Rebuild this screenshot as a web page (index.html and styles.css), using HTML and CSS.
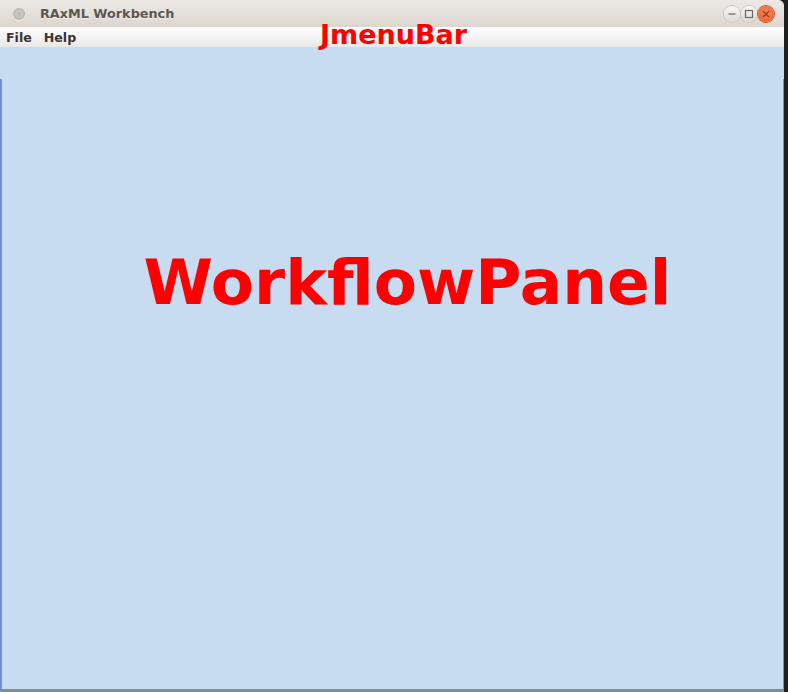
FILE: index.html
```html
<!DOCTYPE html>
<html>
<head>
<meta charset="utf-8">
<link rel="stylesheet" href="styles.css">
</head>
<body>
<div class="window">
  <div class="titlebar">
    <span class="dot"></span>
    <span class="title">RAxML Workbench</span>
    <div class="controls">
      <span class="btn"><svg width="16" height="16" viewBox="0 0 16 16"><line x1="4.5" y1="8" x2="11.5" y2="8" stroke="#6a6660" stroke-width="1.2"/></svg></span>
      <span class="btn"><svg width="16" height="16" viewBox="0 0 16 16"><rect x="4.5" y="4.5" width="7" height="7" fill="none" stroke="#6a6660" stroke-width="1.2"/></svg></span>
      <span class="btn close"><svg width="16" height="16" viewBox="0 0 16 16"><path d="M5 5 L11 11 M11 5 L5 11" stroke="#8a3a1e" stroke-width="1.2"/></svg></span>
    </div>
  </div>
  <div class="menubar">
    <span class="menu">File</span>
    <span class="menu">Help</span>
    <span class="label-menu">JmenuBar</span>
  </div>
  <div class="content">
    <div class="gap"></div>
    <div class="panel">
      <div class="panel-label">WorkflowPanel</div>
    </div>
  </div>
</div>
</body>
</html>
```
FILE: styles.css
```css
html, body {
  margin: 0;
  padding: 0;
  width: 788px;
  height: 692px;
  overflow: hidden;
  background: #1e1e1e;
}
.window {
  width: 784px;
  height: 692px;
  display: flex;
  flex-direction: column;
  background: #c7dcf1;
  border-top-right-radius: 6px;
  overflow: hidden;
  font-family: "DejaVu Sans", sans-serif;
}
.titlebar {
  height: 27px;
  flex: none;
  display: flex;
  align-items: center;
  background: linear-gradient(#ece9e5, #dcd6d0);
  position: relative;
}
.dot {
  width: 12px;
  height: 12px;
  border-radius: 50%;
  margin-left: 13px;
  background: radial-gradient(circle at 50% 50%, #bcb8b2 0, #c8c4be 40%, #a9a49e 100%);
  box-shadow: 0 1px 0 #f4f2ef;
}
.title {
  margin-left: 15px;
  font-weight: bold;
  font-size: 12.8px;
  color: #5b5650;
  text-shadow: 0 1px 0 #f2efec;
}
.controls {
  margin-left: auto;
  margin-right: 10px;
  display: flex;
  gap: 1px;
}
.btn {
  width: 16px;
  height: 16px;
  border-radius: 50%;
  background: linear-gradient(#f8f7f5, #dedad5);
  box-shadow: 0 0 0 1px #cbc6c0;
  display: flex;
}
.btn.close {
  background: radial-gradient(circle at 50% 40%, #f7885a, #e95a28);
  box-shadow: 0 0 0 1px #d6542a;
}
.menubar {
  height: 20px;
  flex: none;
  display: flex;
  align-items: center;
  background: linear-gradient(#ffffff, #e9e8e7);
  position: relative;
}
.menu {
  font-size: 12.6px;
  font-weight: bold;
  color: #3a3436;
  margin-left: 6px;
}
.menu + .menu {
  margin-left: 12px;
}
.label-menu {
  position: absolute;
  left: 320px;
  top: -8px;
  font-size: 27px;
  font-weight: bold;
  color: #ff0000;
}
.content {
  flex: 1;
  display: flex;
  flex-direction: column;
}
.gap {
  height: 32px;
  flex: none;
}
.panel {
  flex: 1;
  border-left: 2px solid #6f8fd8;
  border-right: 1px solid #7f93a8;
  border-bottom: 3px solid #7e8c9a;
  display: flex;
  justify-content: center;
}
.panel-label {
  margin-top: 168px;
  margin-left: 30px;
  font-size: 63px;
  font-weight: bold;
  color: #ff0000;
  line-height: 72px;
  height: 72px;
}
```
